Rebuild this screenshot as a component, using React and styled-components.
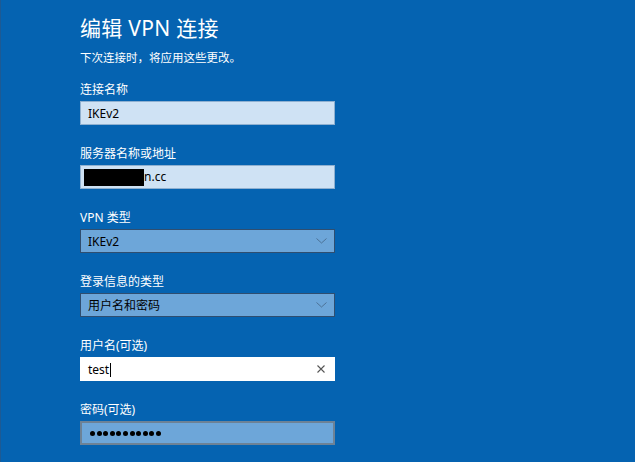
import React from 'react';
import styled, { createGlobalStyle } from 'styled-components';

const GlobalStyle = createGlobalStyle`
  html, body {
    margin: 0;
    padding: 0;
    background: #0563b1;
  }
  body {
    font-family: "Noto Sans", "Noto Sans CJK SC", sans-serif;
  }
`;

const Page = styled.div`
  width: 635px;
  height: 462px;
  box-sizing: border-box;
  background: #0563b1;
  border-left: 1px solid #1d5a94;
  padding: 14px 0 0 79px;
  color: #ffffff;
  overflow: hidden;
`;

const Title = styled.h1`
  margin: 0;
  font-size: 21px;
  font-weight: 400;
  line-height: 28px;
  letter-spacing: 0.3px;
`;

const Note = styled.p`
  margin: 8px 0 0;
  font-size: 11.5px;
  line-height: 16px;
`;

const Field = styled.div`
  display: flex;
  flex-direction: column;
  gap: 3px;
  margin-top: ${({ $first }) => ($first ? '16px' : '21px')};
  width: 255px;
`;

const Label = styled.label`
  font-size: 12px;
  line-height: 16px;
`;

const Box = styled.div`
  height: 24px;
  box-sizing: border-box;
  display: flex;
  align-items: center;
  padding: 0 7px;
  font-size: 12px;
  color: #000;
  border: 1px solid;
  ${({ $kind }) =>
    $kind === 'light'
      ? 'background: #cfe2f4; border-color: #8fb0d0;'
      : $kind === 'white'
      ? 'background: #ffffff; border-color: #ffffff;'
      : $kind === 'pass'
      ? 'background: #6da6d9; border: 2px solid #6d8296;'
      : 'background: #6da6d9; border-color: #2f4e70;'}
`;

const Value = styled.span`
  flex: 1;
  white-space: nowrap;
`;

const Redact = styled.span`
  display: inline-block;
  width: 60px;
  height: 17px;
  margin-left: -4px;
  background: #000;
  vertical-align: middle;
`;

const Caret = styled.span`
  display: inline-block;
  width: 1px;
  height: 14px;
  background: #000;
  vertical-align: middle;
  margin-left: 1px;
`;

const Dots = styled.span`
  flex: 1;
  display: flex;
  gap: 1.6px;
  padding-left: 1px;
`;

const Dot = styled.span`
  width: 5px;
  height: 5px;
  border-radius: 50%;
  background: #000;
`;

const Chevron = () => (
  <svg width="11" height="6" viewBox="0 0 11 6">
    <path d="M0.5 0.5 L5.5 5 L10.5 0.5" fill="none" stroke="#4a6c8e" strokeWidth="0.9" />
  </svg>
);

const Clear = () => (
  <svg width="8" height="8" viewBox="0 0 8 8" style={{ marginRight: 2 }}>
    <path d="M0.5 0.5 L7.5 7.5 M7.5 0.5 L0.5 7.5" stroke="#555" strokeWidth="1.1" />
  </svg>
);

export default function App() {
  return (
    <>
      <GlobalStyle />
      <Page>
        <Title>编辑 VPN 连接</Title>
        <Note>下次连接时，将应用这些更改。</Note>

        <Field $first>
          <Label>连接名称</Label>
          <Box $kind="light">
            <Value>IKEv2</Value>
          </Box>
        </Field>

        <Field>
          <Label>服务器名称或地址</Label>
          <Box $kind="light">
            <Value>
              <Redact />
              n.cc
            </Value>
          </Box>
        </Field>

        <Field>
          <Label>VPN 类型</Label>
          <Box $kind="select">
            <Value>IKEv2</Value>
            <Chevron />
          </Box>
        </Field>

        <Field>
          <Label>登录信息的类型</Label>
          <Box $kind="select">
            <Value>用户名和密码</Value>
            <Chevron />
          </Box>
        </Field>

        <Field>
          <Label>用户名(可选)</Label>
          <Box $kind="white">
            <Value>
              test
              <Caret />
            </Value>
            <Clear />
          </Box>
        </Field>

        <Field>
          <Label>密码(可选)</Label>
          <Box $kind="pass">
            <Dots>
              {Array.from({ length: 11 }).map((_, i) => (
                <Dot key={i} />
              ))}
            </Dots>
          </Box>
        </Field>
      </Page>
    </>
  );
}
